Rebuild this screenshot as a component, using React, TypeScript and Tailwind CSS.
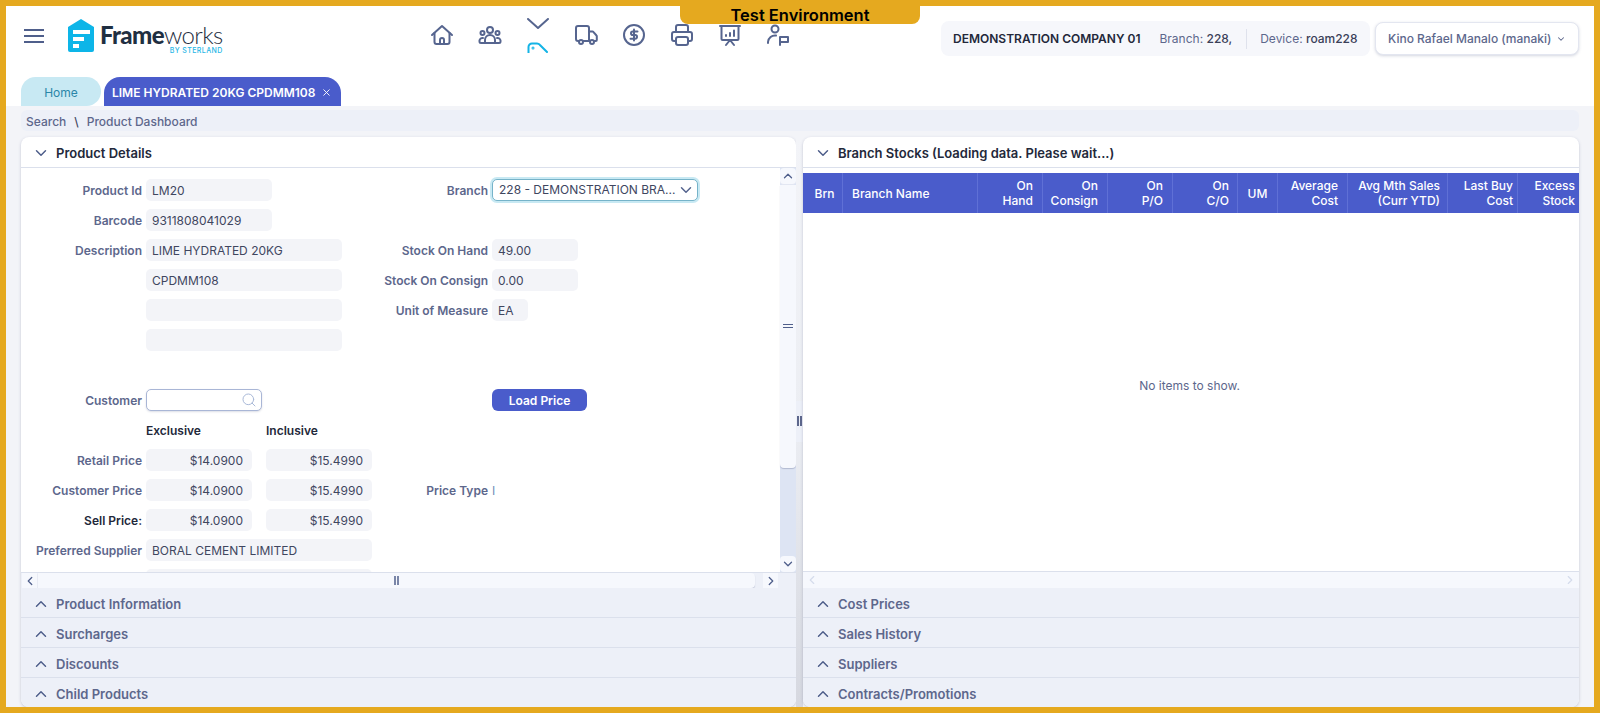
import { ChevronDown, ChevronLeft, ChevronRight, ChevronUp, Search, X } from "lucide-react";
import type { ReactNode } from "react";

const stroke = {
  fill: "none",
  stroke: "#56658f",
  strokeWidth: 2,
  strokeLinecap: "round" as const,
  strokeLinejoin: "round" as const,
};

function NavIcon({ children }: { children: ReactNode }) {
  return (
    <div className="w-12 flex justify-center">
      <svg viewBox="0 0 24 24" className="w-6 h-6" {...stroke}>
        {children}
      </svg>
    </div>
  );
}

function Nav() {
  return (
    <nav className="flex items-start ml-[195px] mt-[17px] font-normal">
      <NavIcon>
        <path d="M2 12 12 3l10 9" />
        <path d="M4.500 10v9a2 2 0 0 0 2 2h11a2 2 0 0 0 2-2v-9" />
        <path d="M10 21v-4a2 2 0 0 1 4 0v4" />
      </NavIcon>
      <NavIcon>
        <circle cx="12" cy="7" r="3" />
        <circle cx="4.500" cy="10" r="2" />
        <circle cx="19.500" cy="10" r="2" />
        <path d="M7 20v-3a5 5 0 0 1 10 0v3z" />
        <path d="M7 20H3a1.500 1.500 0 0 1-1.500-1.500v-1A3 3 0 0 1 5 15M17 20h4a1.500 1.500 0 0 0 1.500-1.500v-1A3 3 0 0 0 19 15" />
      </NavIcon>
      <div className="w-12 flex flex-col items-center -mt-[5px]">
        <svg viewBox="0 0 22 11" className="w-[22px] h-[11px]" {...stroke}>
          <path d="M1 1l10 9 10-9" />
        </svg>
        <svg viewBox="0 0 22 11" className="w-[22px] h-[11px] mt-[13px]" fill="none" stroke="#14b4e6" strokeWidth="2" strokeLinecap="round">
          <path d="M1.500 11V5a3.500 3.500 0 0 1 3.500-3.500h5c1 0 2 .4 2.700 1.200L20 10" />
          <circle cx="6" cy="6" r="0.500" />
        </svg>
      </div>
      <NavIcon>
        <path d="M15 18H9" />
        <path d="M5 18H4a2 2 0 0 1-2-2V5a2 2 0 0 1 2-2h9a2 2 0 0 1 2 2v13" />
        <path d="M15 8.500h3.500a1 1 0 0 1 .8.4l3.200 3.600a1 1 0 0 1 .3.700V17a1 1 0 0 1-1 1h-1" />
        <circle cx="7" cy="19" r="2" />
        <circle cx="18" cy="19" r="2" />
      </NavIcon>
      <NavIcon>
        <circle cx="12" cy="12" r="10" />
        <path d="M15.500 8.500H10.800a1.800 1.800 0 0 0 0 3.600h2.400a1.800 1.800 0 0 1 0 3.600H8.500" />
        <path d="M12 6.500v11" />
      </NavIcon>
      <NavIcon>
        <path d="M6 9V4a2 2 0 0 1 2-2h8a2 2 0 0 1 2 2v5" />
        <path d="M6 18H4a2 2 0 0 1-2-2v-5a2 2 0 0 1 2-2h16a2 2 0 0 1 2 2v5a2 2 0 0 1-2 2h-2" />
        <rect x="6" y="14" width="12" height="8" rx="2" />
      </NavIcon>
      <NavIcon>
        <path d="M2 3h20" />
        <path d="M3.500 3v13a1 1 0 0 0 1 1h15a1 1 0 0 0 1-1V3" />
        <path d="m8 22 4-5 4 5" />
        <path d="M8 13v-1M12 13V10M16 13V7.500" />
      </NavIcon>
      <NavIcon>
        <circle cx="9" cy="6" r="3.500" />
        <path d="M2 20v-1a7 7 0 0 1 8-6.500" />
        <path d="M14 22v-8h8v5h-8" />
      </NavIcon>
    </nav>
  );
}

function Logo() {
  return (
    <div className="flex items-start ml-[24px] mt-[13px]">
      <svg viewBox="0 0 26 33" className="w-[26px] h-[33px]">
        <path d="M13 0 26 8v23a2 2 0 0 1-2 2H2a2 2 0 0 1-2-2V8z" fill="#0db5e8" />
        <rect x="5" y="11" width="17" height="4" fill="#fff" />
        <rect x="5" y="18" width="11" height="4" fill="#fff" />
        <rect x="5" y="25" width="6" height="4" fill="#fff" />
      </svg>
      <div className="ml-[6px] flex flex-col items-end mt-[3px]">
        <div className="text-[24px] leading-[26px] tracking-[-0.6px] text-[#1f2f42] font-['Lato',sans-serif]">
          <span className="font-black">Frame</span>
          <span className="font-light">works</span>
        </div>
        <div className="text-[7px] leading-[7px] tracking-[0.4px] text-[#1fb6e6] -mt-[1px] font-medium">BY STERLAND</div>
      </div>
    </div>
  );
}

function Header() {
  return (
    <header className="h-[71px] shrink-0 flex items-start bg-white">
      <div className="ml-[18px] mt-[23px] w-5 flex flex-col gap-[4px]">
        <div className="h-[2px] bg-[#4f5f8b]" />
        <div className="h-[2px] bg-[#4f5f8b]" />
        <div className="h-[2px] bg-[#4f5f8b]" />
      </div>
      <Logo />
      <Nav />
      <div className="ml-auto mr-[15px] mt-[15px] flex items-center gap-[5px]">
        <div className="h-[35px] w-[429px] rounded-lg bg-[#f6f7fb] flex items-center pl-[12px] text-xs text-[#5d678c]">
          <span className="font-semibold text-[#23283a]">DEMONSTRATION COMPANY 01</span>
          <span className="ml-[19px]">
            Branch: <span className="font-medium text-[#3a4058]">228,</span>
          </span>
          <div className="w-px h-5 bg-[#dfe2ec] ml-[14px] mr-[13px]" />
          <span>
            Device: <span className="font-medium text-[#3a4058]">roam228</span>
          </span>
        </div>
        <div className="h-[33px] w-[204px] rounded-lg border border-[#e3e6f0] shadow-[0_1px_3px_rgba(80,90,130,0.25)] bg-white flex items-center pl-[12px] text-xs font-medium text-[#5d678c]">
          Kino Rafael Manalo (manaki)
          <ChevronDown className="w-[10px] h-[10px] ml-[5px]" strokeWidth={2.5} />
        </div>
      </div>
    </header>
  );
}

function Tabs() {
  return (
    <div className="h-[29px] shrink-0 bg-white flex items-end pl-[15px] gap-[3px]">
      <div className="h-[29px] pt-[2px] w-[80px] rounded-tl-2xl rounded-r-2xl bg-[#c8e9f3] text-[#2a86a8] text-xs flex items-center justify-center">
        Home
      </div>
      <div className="h-[29px] pt-[2px] w-[237px] rounded-t-2xl bg-[#4a5ccb] text-white text-xs font-semibold flex items-center pl-[8px]">
        LIME HYDRATED 20KG CPDMM108
        <X className="w-[11px] h-[11px] ml-[6px]" strokeWidth={2} />
      </div>
    </div>
  );
}

function Field({ children, className = "" }: { children?: ReactNode; className?: string }) {
  return (
    <div className={`h-[22px] pt-[2px] rounded-[5px] bg-[#f3f4f8] px-[6px] flex items-center text-xs text-[#40465f] ${className}`}>
      {children}
    </div>
  );
}

function Label({ children, strong }: { children?: ReactNode; strong?: boolean }) {
  return (
    <div className={`h-[22px] pt-[2px] flex items-center justify-end text-xs font-semibold whitespace-nowrap ${strong ? "text-[#23283a]" : "text-[#5d678c]"}`}>
      {children}
    </div>
  );
}

function Prices({ a, b }: { a: string; b: string }) {
  return (
    <div className="flex gap-[14px]">
      <Field className="w-[106px] justify-end pr-[9px]">{a}</Field>
      <Field className="w-[106px] justify-end pr-[9px]">{b}</Field>
    </div>
  );
}

function ProductForm() {
  return (
    <div className="flex-1 min-w-0 overflow-hidden pt-[11px] grid grid-cols-[121px_226px_112px_1fr] gap-x-1 gap-y-2 auto-rows-[22px]">
      <Label>Product Id</Label>
      <Field className="w-[126px]">LM20</Field>
      <Label>Branch</Label>
      <div className="h-[22px] w-[206px] rounded-[5px] border border-[#76b3c9] ring-2 ring-[#c8e9f3] bg-white flex items-center justify-between pl-[6px] pr-[2px] text-xs text-[#40465f]">
        228 - DEMONSTRATION BRA...
        <ChevronDown className="w-[18px] h-[18px] text-[#56658f]" strokeWidth={2} />
      </div>

      <Label>Barcode</Label>
      <Field className="w-[126px]">9311808041029</Field>
      <div className="col-span-2" />

      <Label>Description</Label>
      <Field className="w-[196px]">LIME HYDRATED 20KG</Field>
      <Label>Stock On Hand</Label>
      <Field className="w-[86px]">49.00</Field>

      <div />
      <Field className="w-[196px]">CPDMM108</Field>
      <Label>Stock On Consign</Label>
      <Field className="w-[86px]">0.00</Field>

      <div />
      <Field className="w-[196px]" />
      <Label>Unit of Measure</Label>
      <Field className="w-[36px]">EA</Field>

      <div />
      <Field className="w-[196px]" />
      <div className="col-span-2" />

      <div className="col-span-4" />

      <Label>Customer</Label>
      <div className="h-[22px] w-[116px] rounded-[5px] border border-[#a9b6d6] shadow-[0_1px_2px_rgba(80,90,130,0.2)] bg-white flex items-center justify-end pr-[4px]">
        <Search className="w-4 h-4 text-[#a9b9d8]" strokeWidth={1.5} />
      </div>
      <div />
      <button className="h-[22px] pt-[2px] w-[95px] rounded-[6px] bg-[#4a5ccb] text-white text-xs font-semibold">Load Price</button>

      <div />
      <div className="flex gap-[14px] pt-[2px] text-xs font-semibold text-[#23283a] items-center">
        <span className="w-[106px]">Exclusive</span>
        <span>Inclusive</span>
      </div>
      <div className="col-span-2" />

      <Label>Retail Price</Label>
      <Prices a="$14.0900" b="$15.4990" />
      <div className="col-span-2" />

      <Label>Customer Price</Label>
      <Prices a="$14.0900" b="$15.4990" />
      <Label>Price Type</Label>
      <div className="h-[22px] pt-[2px] flex items-center text-xs font-normal text-[#6f8ab8]">I</div>

      <Label strong>Sell Price:</Label>
      <Prices a="$14.0900" b="$15.4990" />
      <div className="col-span-2" />

      <Label>Preferred Supplier</Label>
      <Field>BORAL CEMENT LIMITED</Field>
      <div className="col-span-2" />

      <div />
      <Field />
    </div>
  );
}

function Accordion({ items }: { items: string[] }) {
  return (
    <div className="shrink-0">
      {items.map((t) => (
        <div
          key={t}
          className="h-[30px] last:h-[29px] pt-[2px] border-b last:border-b-0 border-[#dbe0ec] bg-[#edf0f8] flex items-center pl-[11px] text-[13px] font-semibold text-[#5d678c]"
        >
          <ChevronUp className="w-[18px] h-[18px] text-[#4f5f8b] mr-[6px]" strokeWidth={2} />
          <span className="pt-[2px]">{t}</span>
        </div>
      ))}
    </div>
  );
}

function PanelHeader({ title }: { title: string }) {
  return (
    <div className="h-[31px] pt-[2px] shrink-0 border-b border-[#dbe0ec] flex items-center pl-[11px] text-[13px] font-semibold text-[#23283a]">
      <ChevronDown className="w-[18px] h-[18px] text-[#4f5f8b] mr-[6px]" strokeWidth={2} />
      <span className="pt-[2px]">{title}</span>
    </div>
  );
}

function LeftPanel() {
  return (
    <section className="w-[775px] shrink-0 rounded-lg overflow-hidden bg-white flex flex-col shadow-[0_1px_3px_rgba(80,90,130,0.3)]">
      <PanelHeader title="Product Details" />
      <div className="flex-1 min-h-0 flex">
        <ProductForm />
        <div className="w-4 shrink-0 bg-[#dde4f3] flex flex-col">
          <div className="h-[17px] shrink-0 bg-[#f6f8fd] flex items-center justify-center border-b border-[#e3e7f2] rounded-sm">
            <ChevronUp className="w-[14px] h-[14px] text-[#4f5f8b]" strokeWidth={2.2} />
          </div>
          <div className="h-[283px] shrink-0 bg-[#f6f8fd] rounded-b-sm shadow-[0_1px_1px_rgba(80,90,130,0.3)] flex flex-col items-center pt-[139px] gap-[2px]">
            <div className="w-[10px] h-px bg-[#4f5f8b]" />
            <div className="w-[10px] h-px bg-[#4f5f8b]" />
          </div>
          <div className="mt-auto h-[16px] shrink-0 bg-[#f6f8fd] flex items-center justify-center rounded-sm">
            <ChevronDown className="w-[14px] h-[14px] text-[#4f5f8b]" strokeWidth={2.2} />
          </div>
        </div>
      </div>
      <div className="h-4 shrink-0 bg-[#edf0f8] border-t border-[#dbe0ec] flex items-center pl-px">
        <div className="w-[15px] h-[15px] bg-[#f6f8fd] flex items-center justify-center">
          <ChevronLeft className="w-[14px] h-[14px] text-[#4f5f8b]" strokeWidth={2.2} />
        </div>
        <div className="w-[717px] h-[15px] bg-[#f6f8fd] rounded-r-sm shadow-[0_1px_1px_rgba(80,90,130,0.3)] flex items-center justify-center gap-px ml-px">
          <div className="w-[2px] h-[9px] bg-[#7a86a8]" />
          <div className="w-[2px] h-[9px] bg-[#7a86a8]" />
        </div>
        <div className="w-[15px] h-[15px] bg-[#f6f8fd] flex items-center justify-center ml-2">
          <ChevronRight className="w-[14px] h-[14px] text-[#4f5f8b]" strokeWidth={2.2} />
        </div>
      </div>
      <Accordion items={["Product Information", "Surcharges", "Discounts", "Child Products"]} />
    </section>
  );
}

const columns: { top?: string; bottom: string; className: string }[] = [
  { bottom: "Brn", className: "w-[40px] justify-center text-center pl-[4px]" },
  { bottom: "Branch Name", className: "w-[135px] justify-start pl-[9px]" },
  { top: "On", bottom: "Hand", className: "w-[65px] justify-end text-right pr-[9px]" },
  { top: "On", bottom: "Consign", className: "w-[65px] justify-end text-right pr-[9px]" },
  { top: "On", bottom: "P/O", className: "w-[65px] justify-end text-right pr-[9px]" },
  { top: "On", bottom: "C/O", className: "w-[65px] justify-end text-right pr-[8px]" },
  { bottom: "UM", className: "w-[40px] justify-center text-center" },
  { top: "Average", bottom: "Cost", className: "w-[70px] justify-end text-right pr-[9px]" },
  { top: "Avg Mth Sales", bottom: "(Curr YTD)", className: "w-[100px] justify-end text-right pr-[7px]" },
  { top: "Last Buy", bottom: "Cost", className: "w-[70px] justify-end text-right pr-[4px]" },
  { top: "Excess", bottom: "Stock", className: "flex-1 justify-end text-right pr-[4px] border-r-0" },
];

function RightPanel() {
  return (
    <section className="flex-1 min-w-0 rounded-lg overflow-hidden bg-white flex flex-col shadow-[0_1px_3px_rgba(80,90,130,0.3)]">
      <PanelHeader title="Branch Stocks (Loading data. Please wait...)" />
      <div className="flex-1 min-h-0 pt-[5px] flex flex-col">
        <div className="h-10 shrink-0 bg-[#4a5ccb] flex text-xs font-medium text-white">
          {columns.map((c) => (
            <div
              key={c.bottom}
              className={`flex items-center leading-[15px] border-r border-[#5f70d6] ${c.className}`}
            >
              <div>
                {c.top && <div>{c.top}</div>}
                <div>{c.bottom}</div>
              </div>
            </div>
          ))}
        </div>
        <div className="flex-1 flex items-center justify-center pb-[12px] pr-[3px] text-xs text-[#5d678c] border-b border-[#dbe0ec]">
          No items to show.
        </div>
      </div>
      <div className="h-4 shrink-0 bg-[#edf0f8] flex justify-between">
        <div className="w-[18px] bg-[#f6f8fd] flex items-center justify-center">
          <ChevronLeft className="w-[14px] h-[14px] text-[#d5dcec]" />
        </div>
        <div className="flex-1 bg-[#f6f8fd]" />
        <div className="w-[18px] bg-[#f6f8fd] flex items-center justify-center">
          <ChevronRight className="w-[14px] h-[14px] text-[#d5dcec]" />
        </div>
      </div>
      <Accordion items={["Cost Prices", "Sales History", "Suppliers", "Contracts/Promotions"]} />
    </section>
  );
}

function Splitter() {
  return (
    <div className="w-[7px] shrink-0 bg-gradient-to-b from-[#f3f4f8] via-[#eceef3] to-[#d6d8e0] flex items-center pb-[19px]">
      <div className="w-full h-[41px] mt-[17px] bg-[#edf0f8] flex items-center justify-center gap-px">
        <div className="w-[2px] h-[10px] bg-[#5d678c]" />
        <div className="w-[2px] h-[10px] bg-[#5d678c]" />
      </div>
    </div>
  );
}

export default function App() {
  return (
    <div className="relative h-[713px] border-[6px] border-[#e5a91f] overflow-hidden flex flex-col bg-white font-['Inter',sans-serif]">
      <div className="absolute top-0 left-[674px] w-[240px] h-[18px] rounded-b-lg bg-[#e5a91f] text-black text-[16.500px] leading-[18px] font-semibold text-center">
        Test Environment
      </div>
      <Header />
      <Tabs />
      <main className="flex-1 min-h-0 bg-[#f3f4f8] flex flex-col pl-[15px] pr-[15px] pt-1">
        <div className="h-[21px] pt-[2px] shrink-0 rounded-md bg-[#edf0f8] flex items-center pl-[5px] text-xs font-medium text-[#5d678c]">
          Search
          <span className="mx-[8px] text-[#40465f]">\</span>
          Product Dashboard
        </div>
        <div className="flex-1 min-h-0 mt-[6px] flex">
          <LeftPanel />
          <Splitter />
          <RightPanel />
        </div>
      </main>
    </div>
  );
}
